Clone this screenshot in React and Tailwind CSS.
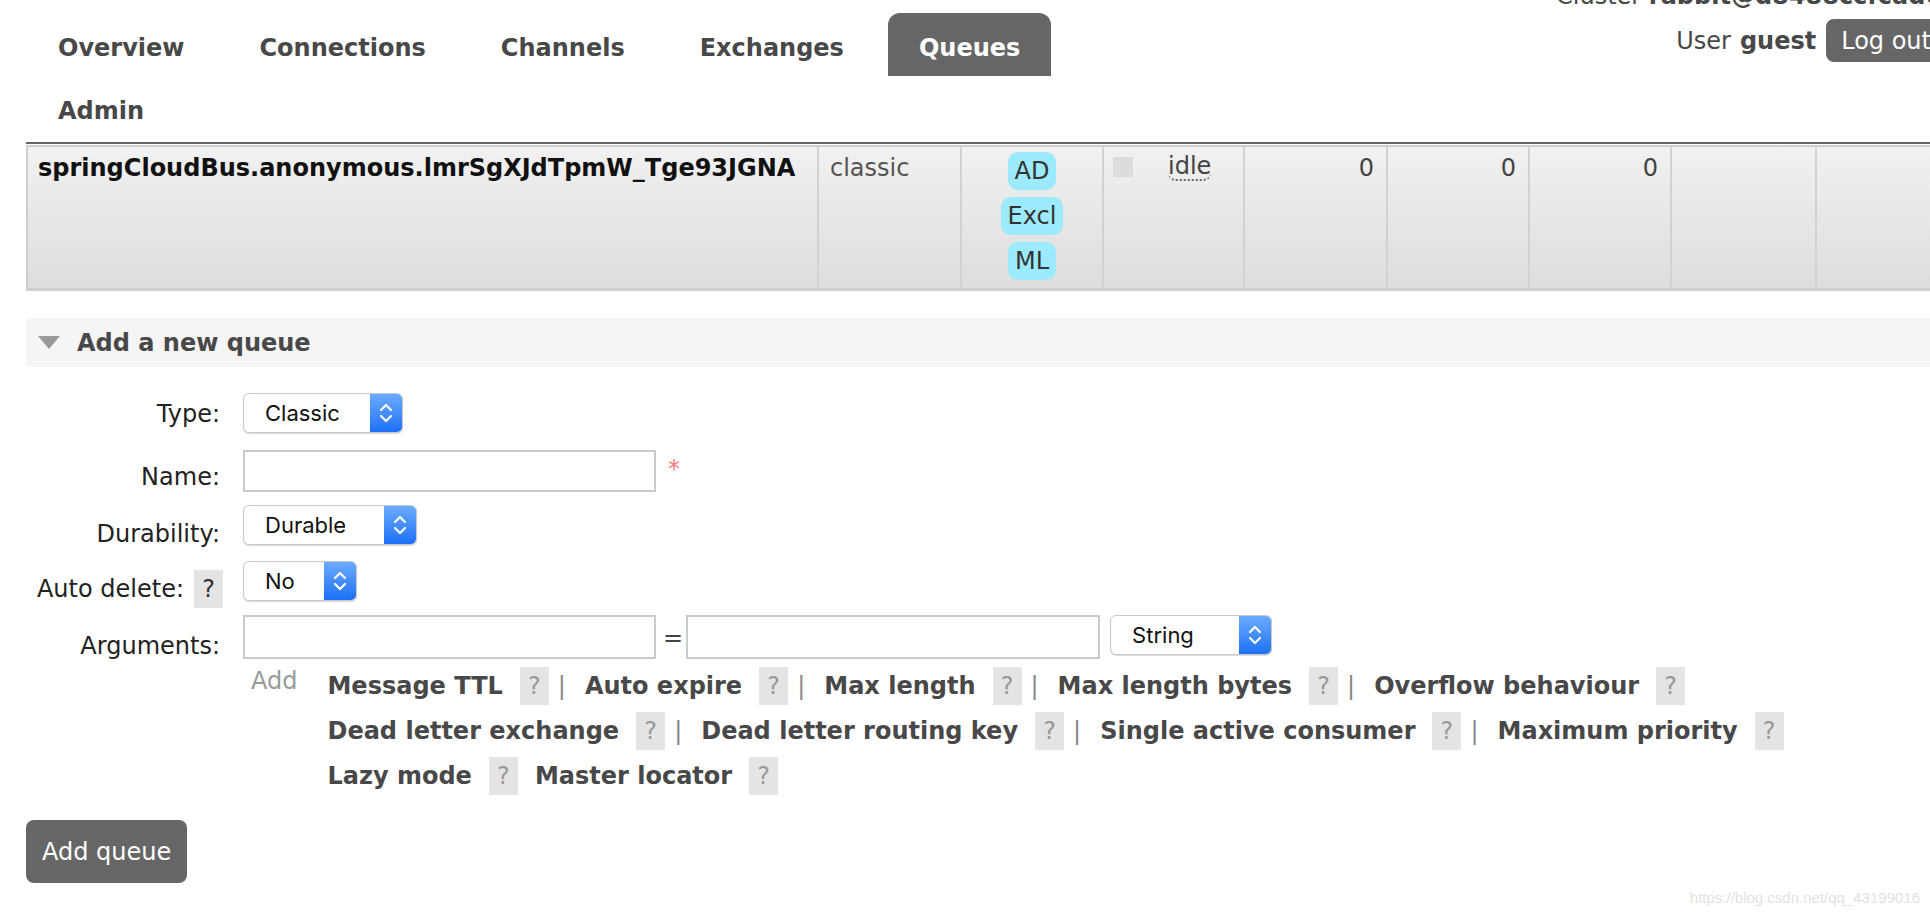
import React from "react";

const navItems = ["Overview", "Connections", "Channels", "Exchanges", "Queues", "Admin"];

function Chevrons() {
  return (
    <svg width="14" height="24" viewBox="0 0 14 24" fill="none" stroke="white" strokeWidth="2.2" strokeLinecap="round" strokeLinejoin="round">
      <polyline points="2,9 7,4 12,9" />
      <polyline points="2,15 7,20 12,15" />
    </svg>
  );
}

function Select({ value, width }) {
  return (
    <div className={`flex h-[40px] ${width} overflow-hidden rounded-[6px] border border-[#c9c9c9] bg-white shadow-[0_1px_1px_rgba(0,0,0,0.15)]`}>
      <div className="flex flex-1 items-center pl-[21px] font-['Inter',sans-serif] text-[22px] text-[#111]">{value}</div>
      <div className="flex w-[32px] items-center justify-center bg-linear-to-b from-[#6aaaff] to-[#1b70f5]">
        <Chevrons />
      </div>
    </div>
  );
}

function Help({ dark }) {
  return (
    <span className={`inline-flex h-[38px] w-[29px] items-center justify-center bg-[#e4e4e4] font-normal ${dark ? "text-[#333]" : "text-[#999]"}`}>
      ?
    </span>
  );
}

function Arg({ name, bar }) {
  return (
    <div className="flex items-center">
      <span className="font-bold text-[#484848]">{name}</span>
      <span className="ml-[17px]">
        <Help />
      </span>
      {bar ? <span className="ml-[9px] mr-[19px] text-[#888]">|</span> : <span className="mr-[17px]" />}
    </div>
  );
}

function Pill({ children }) {
  return <span className="rounded-[10px] bg-[#9beafd] px-[7px] py-[4px] text-[#333]">{children}</span>;
}

export default function App() {
  return (
    <div className="h-[918px] w-[1930px] overflow-hidden bg-white font-['DejaVu_Sans',sans-serif] text-[24px] leading-[30px] text-[#222]">
      <div className="w-[1960px]">
        {/* header */}
        <div className="flex items-start">
          <nav className="ml-[27px] mt-[13px] flex w-[1100px] flex-wrap gap-x-[13px]">
            {navItems.map((item) => (
              <a
                key={item}
                className={
                  item === "Queues"
                    ? "flex h-[63px] items-center rounded-t-[12px] bg-[#666] px-[31px] pt-[6px] font-bold text-white"
                    : "flex h-[63px] items-center px-[31px] pt-[6px] font-bold text-[#484848]"
                }
              >
                {item}
              </a>
            ))}
          </nav>
          <div className="ml-auto mr-[14px] w-[390px]">
            <div className="mt-[-19px] h-[30px] whitespace-nowrap text-[#484848]">
              Cluster <b>rabbit@d8488ccfcad6</b>
            </div>
            <div className="mt-[8px] flex h-[43px] items-center justify-end text-[#484848]">
              <span>User</span>
              <b className="ml-[9px]">guest</b>
              <button className="ml-[10px] h-[43px] rounded-[8px] bg-[#666] px-[15px] text-white">Log out</button>
            </div>
          </div>
        </div>

        {/* queue table */}
        <div className="ml-[26px] mt-[3px] border-t-2 border-[#666] pt-[1px]">
          <div className="flex h-[146px] border-l-2 border-t-2 border-b-[3px] border-[#cfcfcf] bg-linear-to-b from-[#f1f1f1] to-[#dddddd]">
            <div className="w-[789px] shrink-0 whitespace-nowrap pl-[10px] pt-[6px] font-bold text-[#111]">
              springCloudBus.anonymous.lmrSgXJdTpmW_Tge93JGNA
            </div>
            <div className="w-[143px] shrink-0 border-l-2 border-[#d2d2d2] pl-[11px] pt-[6px] text-[#555]">classic</div>
            <div className="flex w-[142px] shrink-0 flex-col items-center gap-[7px] border-l-2 border-[#d2d2d2] pt-[5px]">
              <Pill>AD</Pill>
              <Pill>Excl</Pill>
              <Pill>ML</Pill>
            </div>
            <div className="flex w-[141px] shrink-0 items-start border-l-2 border-[#d2d2d2] pl-[9px] pt-[6px]">
              <span className="mt-[4px] h-[20px] w-[20px] bg-[#dcdcdc]" />
              <span className="ml-[35px] h-[28px] rounded-b-[8px] border-b-2 border-dotted border-[#666] leading-[26px] text-[#444]">idle</span>
            </div>
            <div className="w-[143px] shrink-0 border-l-2 border-[#d2d2d2] pr-[12px] pt-[6px] text-right text-[#444]">0</div>
            <div className="w-[142px] shrink-0 border-l-2 border-[#d2d2d2] pr-[12px] pt-[6px] text-right text-[#444]">0</div>
            <div className="w-[142px] shrink-0 border-l-2 border-[#d2d2d2] pr-[12px] pt-[6px] text-right text-[#444]">0</div>
            <div className="w-[145px] shrink-0 border-l-2 border-[#d2d2d2]" />
            <div className="w-[200px] shrink-0 border-l-2 border-[#d2d2d2]" />
          </div>
        </div>

        {/* add a new queue */}
        <div className="ml-[26px] mt-[27px] flex h-[49px] items-center bg-[#f5f5f5]">
          <svg className="ml-[12px]" width="22" height="14" viewBox="0 0 22 14">
            <polygon points="0,0 22,0 11,13" fill="#9a9a9a" />
          </svg>
          <span className="ml-[17px] font-bold text-[#484848]">Add a new queue</span>
        </div>

        <div className="mt-[26px]">
          <div className="flex h-[40px] items-start">
            <div className="mt-[6px] w-[223px] pr-[3px] text-right">Type:</div>
            <div className="ml-[20px]">
              <Select value="Classic" width="w-[160px]" />
            </div>
          </div>

          <div className="mt-[17px] flex h-[42px] items-start">
            <div className="mt-[12px] w-[223px] pr-[3px] text-right">Name:</div>
            <input className="ml-[20px] h-[42px] w-[413px] border-2 border-[#cbcbcb] bg-white outline-none" />
            <span className="ml-[12px] mt-[4px] text-[#f57b7b]">*</span>
          </div>

          <div className="mt-[13px] flex h-[40px] items-start">
            <div className="mt-[14px] w-[223px] pr-[3px] text-right">Durability:</div>
            <div className="ml-[20px]">
              <Select value="Durable" width="w-[174px]" />
            </div>
          </div>

          <div className="mt-[16px] flex h-[40px] items-start">
            <div className="mt-[9px] flex w-[223px] items-center justify-end">
              <span>Auto delete:</span>
              <span className="ml-[10px]">
                <Help dark />
              </span>
            </div>
            <div className="ml-[20px]">
              <Select value="No" width="w-[114px]" />
            </div>
          </div>

          <div className="mt-[14px] flex h-[44px] items-start">
            <div className="mt-[16px] w-[223px] pr-[3px] text-right">Arguments:</div>
            <input className="ml-[20px] h-[44px] w-[413px] border-2 border-[#cbcbcb] bg-white outline-none" />
            <span className="ml-[7px] mr-[3px] mt-[8px] text-[#444]">=</span>
            <input className="h-[44px] w-[414px] border-2 border-[#cbcbcb] bg-white outline-none" />
            <div className="ml-[10px]">
              <Select value="String" width="w-[162px]" />
            </div>
          </div>

          <div className="mt-[8px] flex items-start">
            <span className="ml-[251px] mt-[-1px] text-[#999]">Add</span>
            <div className="ml-[30px] flex flex-col gap-[7px]">
              <div className="flex">
                <Arg name="Message TTL" bar />
                <Arg name="Auto expire" bar />
                <Arg name="Max length" bar />
                <Arg name="Max length bytes" bar />
                <Arg name="Overflow behaviour" />
              </div>
              <div className="flex">
                <Arg name="Dead letter exchange" bar />
                <Arg name="Dead letter routing key" bar />
                <Arg name="Single active consumer" bar />
                <Arg name="Maximum priority" />
              </div>
              <div className="flex">
                <Arg name="Lazy mode" />
                <Arg name="Master locator" />
              </div>
            </div>
          </div>

          <button className="ml-[26px] mt-[25px] h-[63px] rounded-[8px] bg-[#666] px-[16px] text-white">Add queue</button>
        </div>

        <div className="mt-[6px] w-[1930px] pr-[10px] text-right font-['Liberation_Sans',sans-serif] text-[15px] leading-[18px] text-[#e2e2e2]">
          https://blog.csdn.net/qq_43199016
        </div>
      </div>
    </div>
  );
}
